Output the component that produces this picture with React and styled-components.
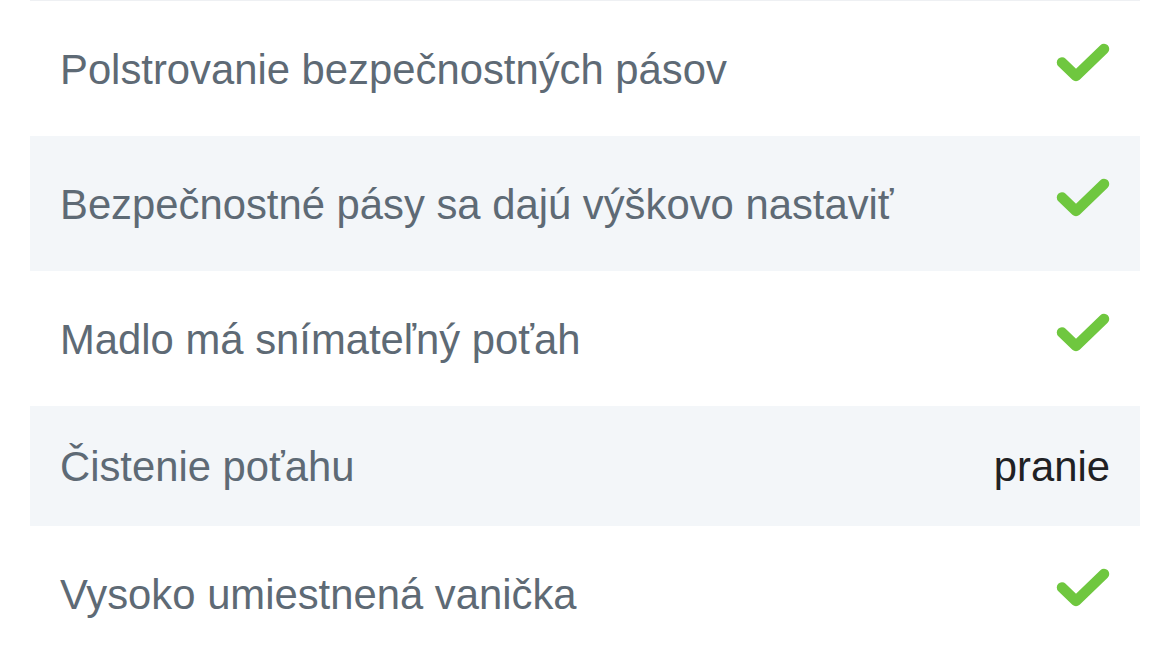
import styled, { createGlobalStyle } from "styled-components";

const GlobalStyle = createGlobalStyle`
  body {
    margin: 0;
    background: #ffffff;
    font-family: "Liberation Sans", Arial, Helvetica, sans-serif;
  }
`;

const Wrapper = styled.section`
  padding: 0 30px;
`;

const List = styled.div`
  border-top: 1px solid #eef0f3;
  display: flex;
  flex-direction: column;
`;

const Row = styled.div`
  height: ${(props) => props.h}px;
  padding: 0 30px;
  display: flex;
  align-items: center;
  justify-content: space-between;
  background-color: ${(props) => (props.shaded ? "#f3f6f9" : "#ffffff")};
`;

const Label = styled.span`
  font-size: 41.8px;
  color: #5e6a75;
  padding-top: 2px;
`;

const Value = styled.span`
  font-size: 41.8px;
  color: #1f2124;
  padding-top: 2px;
`;

const CheckIcon = styled.svg`
  width: 54px;
  height: 40px;
  margin-bottom: 11px;
`;

const Check = () => (
  <CheckIcon viewBox="0 0 54 40">
    <polyline
      points="6,19.5 20,33 48,6"
      fill="none"
      stroke="#6fc73f"
      strokeWidth="10.5"
      strokeLinecap="round"
      strokeLinejoin="round"
    />
  </CheckIcon>
);

const items = [
  { label: "Polstrovanie bezpečnostných pásov", check: true },
  { label: "Bezpečnostné pásy sa dajú výškovo nastaviť", check: true },
  { label: "Madlo má snímateľný poťah", check: true },
  { label: "Čistenie poťahu", value: "pranie" },
  { label: "Vysoko umiestnená vanička", check: true },
];

const App = () => {
  return (
    <>
      <GlobalStyle />
      <Wrapper>
        <List>
          {items.map((item, i) => (
            <Row key={item.label} shaded={i % 2 === 1} h={item.check ? 135 : 120}>
              <Label>{item.label}</Label>
              {item.check ? <Check /> : <Value>{item.value}</Value>}
            </Row>
          ))}
        </List>
      </Wrapper>
    </>
  );
};

export default App;
